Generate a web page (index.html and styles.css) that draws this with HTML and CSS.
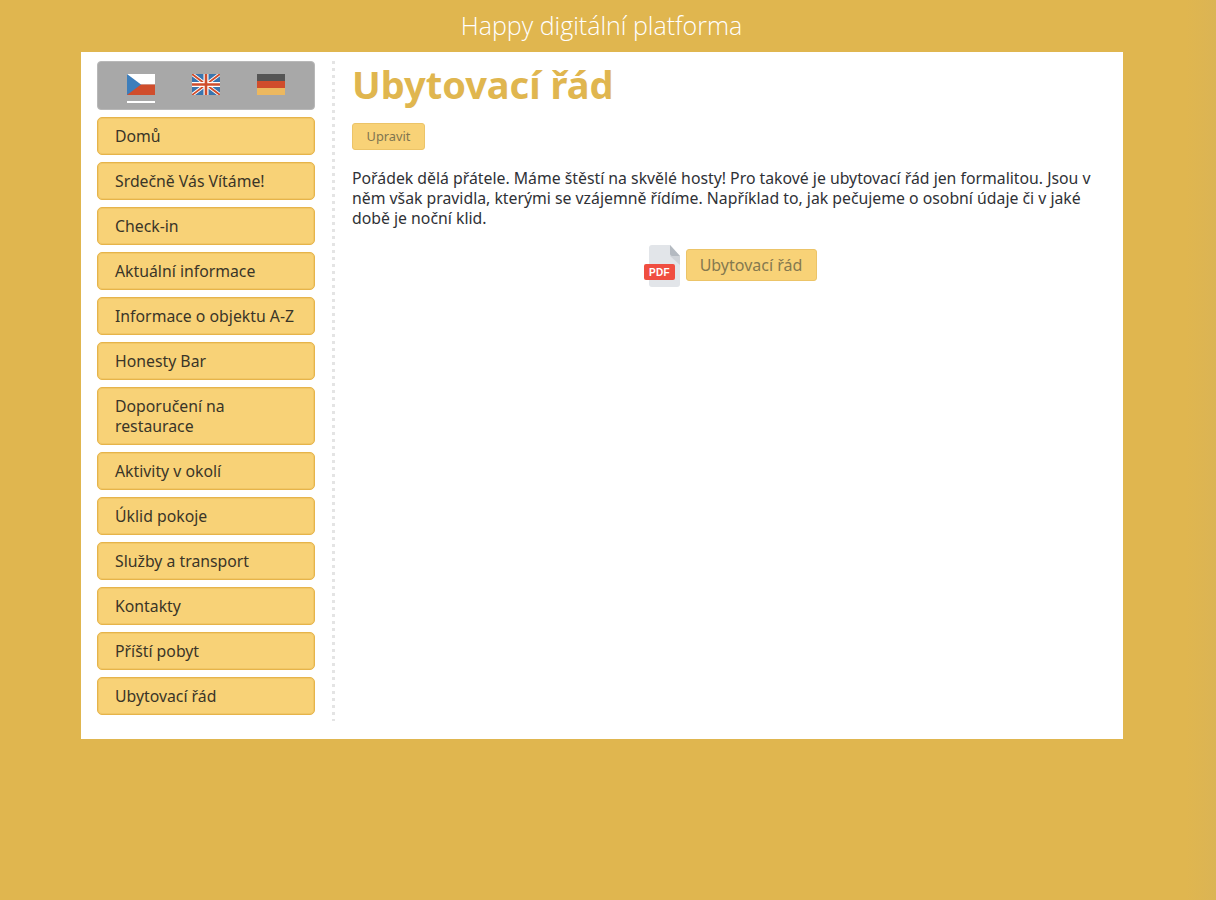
FILE: index.html
```html
<!DOCTYPE html>
<html lang="cs">
<head>
<meta charset="utf-8">
<title>Ubytovací řád</title>
<link rel="stylesheet" href="styles.css">
</head>
<body>
<header class="top">Happy digitální platforma</header>
<div class="sheet">
  <aside class="side">
    <div class="langs">
      <a class="lang active"><svg class="flag" viewBox="0 0 28 21"><rect width="28" height="10.5" fill="#fff"/><rect y="10.5" width="28" height="10.5" fill="#d04d2c"/><path d="M0 0L14 10.5L0 21Z" fill="#3d7ebb"/></svg></a>
      <a class="lang"><svg class="flag" viewBox="0 0 28 21"><rect width="28" height="21" fill="#3a74ad"/><path d="M0 0L28 21M28 0L0 21" stroke="#fff" stroke-width="3.6"/><path d="M0 0L28 21M28 0L0 21" stroke="#d04d2c" stroke-width="1.8"/><path d="M14 0V21M0 10.5H28" stroke="#fff" stroke-width="5"/><path d="M14 0V21M0 10.5H28" stroke="#d04d2c" stroke-width="2.6"/></svg></a>
      <a class="lang"><svg class="flag" viewBox="0 0 28 21"><rect width="28" height="7" fill="#555"/><rect y="7" width="28" height="7" fill="#d04d2c"/><rect y="14" width="28" height="7" fill="#ecb85f"/></svg></a>
    </div>
    <nav class="menu">
      <a class="item">Domů</a>
      <a class="item">Srdečně Vás Vítáme!</a>
      <a class="item">Check-in</a>
      <a class="item">Aktuální informace</a>
      <a class="item">Informace o objektu A-Z</a>
      <a class="item">Honesty Bar</a>
      <a class="item">Doporučení na restaurace</a>
      <a class="item">Aktivity v okolí</a>
      <a class="item">Úklid pokoje</a>
      <a class="item">Služby a transport</a>
      <a class="item">Kontakty</a>
      <a class="item">Příští pobyt</a>
      <a class="item">Ubytovací řád</a>
    </nav>
  </aside>
  <main class="content">
    <h1 class="title">Ubytovací řád</h1>
    <a class="edit">Upravit</a>
    <p class="text">Pořádek dělá přátele. Máme štěstí na skvělé hosty! Pro takové je ubytovací řád jen formalitou. Jsou v něm však pravidla, kterými se vzájemně řídíme. Například to, jak pečujeme o osobní údaje či v jaké době je noční klid.</p>
    <div class="download">
      <svg class="pdf" width="38" height="44" viewBox="0 -1 38 44"><path d="M8 0H26L36 11V39a3 3 0 0 1-3 3H8a3 3 0 0 1-3-3V3a3 3 0 0 1 3-3Z" fill="#e2e5e9"/><path d="M26 11L36 11V20Z" fill="#cfd3d8"/><path d="M26 0L36 11H28a2 2 0 0 1-2-2Z" fill="#b4bac1"/><rect x="0" y="19" width="31" height="16" rx="2" fill="#f04e41"/><text x="15.5" y="31" class="pdf-label" text-anchor="middle">PDF</text></svg>
      <a class="doc">Ubytovací řád</a>
    </div>
  </main>
</div>
</body>
</html>
```
FILE: styles.css
```css
* { box-sizing: border-box; }
html, body { margin: 0; padding: 0; }
body {
  min-height: 900px;
  background: linear-gradient(to right, #e0b64f 97.5%, #dbb454);
  font-family: "Noto Sans", "Open Sans", sans-serif;
  color: #3a3528;
}
.top {
  height: 52px;
  padding-top: 9px;
  padding-right: 13px;
  text-align: center;
  color: #fff;
  font-size: 25px;
  line-height: 32px;
  font-weight: 300;
  font-family: "Open Sans", sans-serif;
}
.sheet {
  display: flex;
  width: 1042px;
  height: 687px;
  margin-left: 81px;
  background: #fff;
  padding-top: 9px;
}
.side {
  width: 254px;
  height: 660px;
  padding-left: 16px;
  padding-right: 20px;
  background: radial-gradient(circle at 1.5px 1.5px, #e4e4e4 1.5px, transparent 1.8px) right top / 3px 7px repeat-y;
}
.langs {
  display: flex;
  justify-content: space-between;
  width: 218px;
  height: 49px;
  padding: 12px 29px 0;
  background: #a8a8a8;
  border: 1px solid #b8b8b8;
  border-radius: 4px;
}
.lang {
  display: block;
  width: 28px;
  height: 29px;
}
.lang.active { border-bottom: 2px solid #fff; }
.flag { display: block; width: 28px; height: 21px; }
.menu {
  display: flex;
  flex-direction: column;
  gap: 7px;
  margin-top: 7px;
  width: 218px;
}
.item {
  display: block;
  min-height: 38px;
  padding: 8px 17px;
  background: #f8d277;
  border: 1px solid #e6b44a;
  box-shadow: inset 0 0 0 1px #f1c768;
  border-radius: 5px;
  font-size: 15.8px;
  line-height: 20px;
}
.content {
  flex: 1;
  padding-left: 17px;
  padding-right: 29px;
}
.title {
  margin: 0;
  color: #e0b64f;
  font-size: 38px;
  line-height: 46px;
  font-weight: 700;
}
.edit {
  display: block;
  width: 73px;
  height: 27px;
  margin-top: 16px;
  background: #f8d277;
  border: 1px solid #ecc468;
  border-radius: 3px;
  color: #7f7550;
  font-size: 12.8px;
  line-height: 25px;
  text-align: center;
}
.text {
  margin: 17.6px 0 0;
  font-size: 15.8px;
  line-height: 20.4px;
  color: #2f3136;
}
.download {
  display: flex;
  align-items: center;
  justify-content: center;
  gap: 4px;
  margin-top: 15px;
  padding-left: 14px;
}
.pdf { display: block; }
.pdf-label {
  font-family: "Liberation Sans", sans-serif;
  font-size: 10px;
  font-weight: 700;
  letter-spacing: .4px;
  fill: #fff;
}
.doc {
  display: block;
  width: 131px;
  height: 32px;
  margin-bottom: 2px;
  background: #f8d277;
  border: 1px solid #ecc468;
  border-radius: 3px;
  color: #85794f;
  font-size: 16px;
  line-height: 30px;
  text-align: center;
}
```
